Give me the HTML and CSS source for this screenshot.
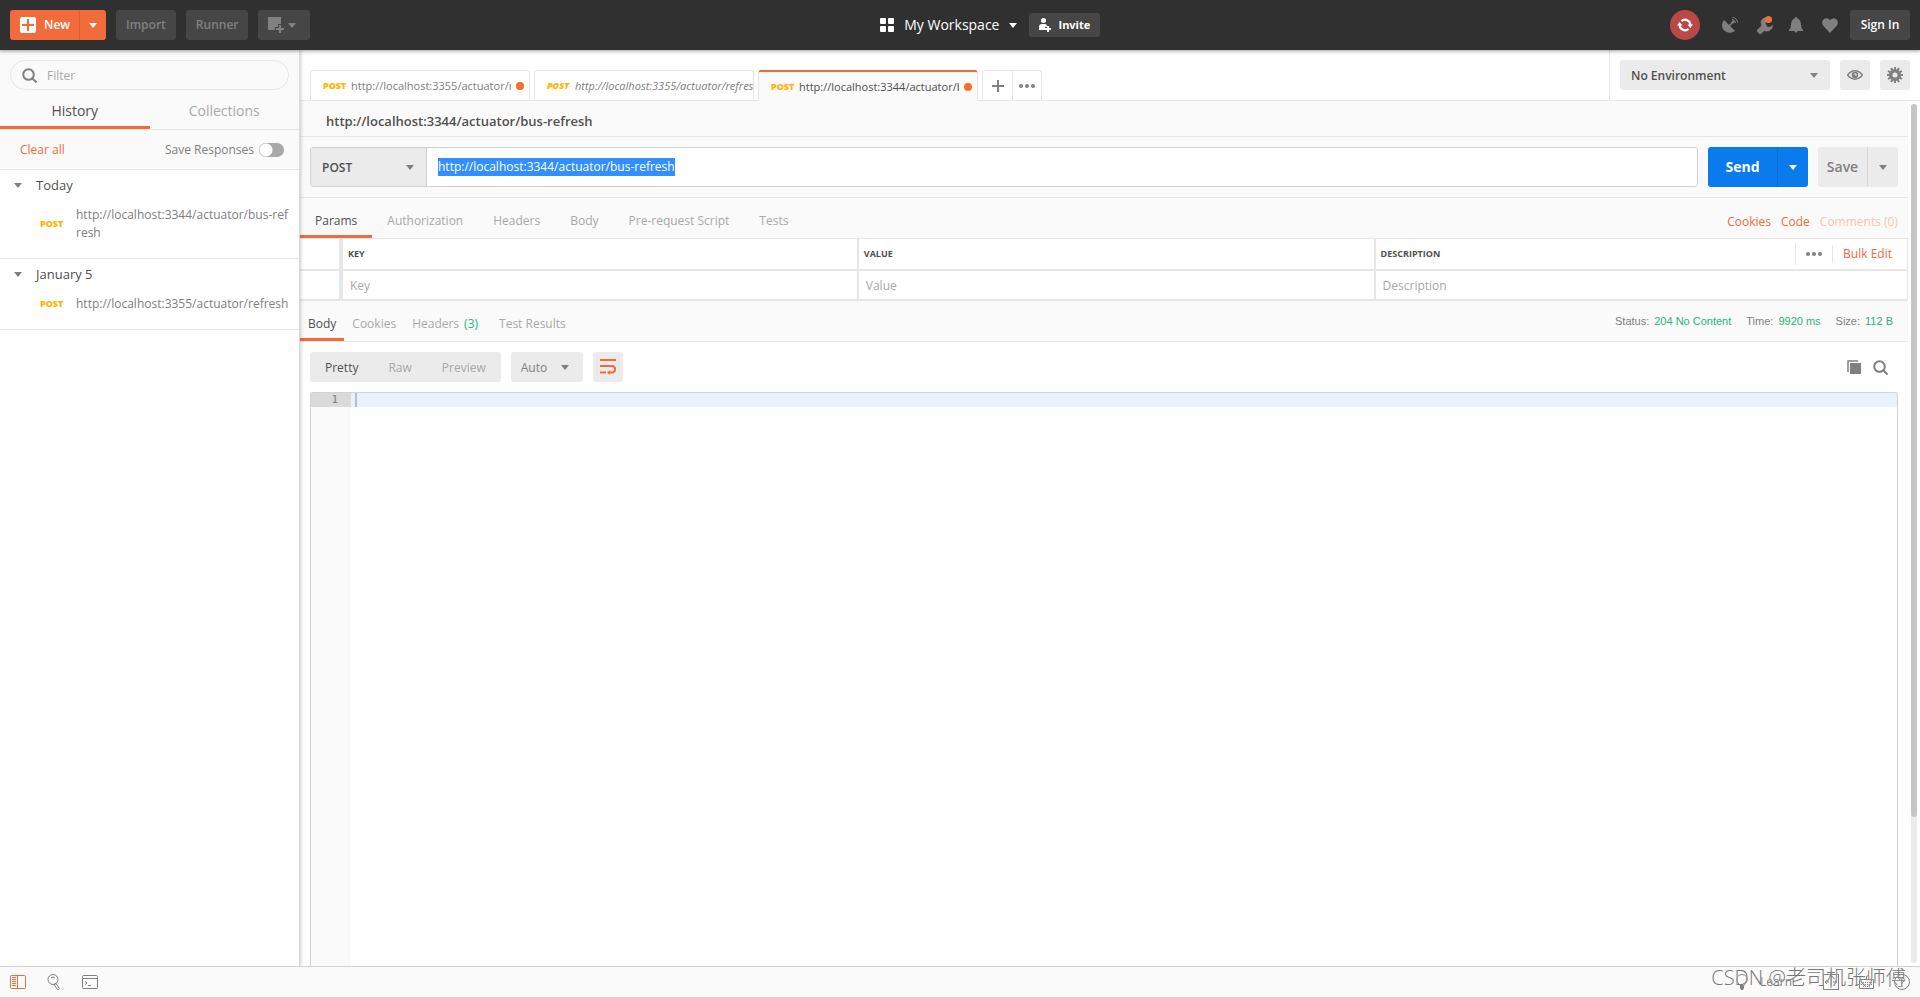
FILE: index.html
```html
<!DOCTYPE html>
<html lang="en">
<head>
<meta charset="utf-8">
<title>Postman</title>
<link rel="stylesheet" href="styles.css">
</head>
<body>
<div class="app">
  <header class="topbar">
    <div class="topbar-side">
      <div class="split split-new">
        <button class="btn-new" type="button">
          <svg width="16" height="16" viewBox="0 0 16 16"><rect width="16" height="16" rx="2" fill="#fff"/><path d="M8 2v12M2 8h12" stroke="#f26b3a" stroke-width="2"/></svg>
          New
        </button>
        <button class="btn-new-more" type="button" aria-label="More new options"><svg class="caret" viewBox="0 0 8 5"><path d="M0 0h8L4 5z"/></svg></button>
      </div>
      <button class="btn-dark" type="button">Import</button>
      <button class="btn-dark" type="button">Runner</button>
      <button class="btn-dark btn-window" type="button" aria-label="New window">
        <svg width="16" height="16" viewBox="0 0 16 16"><path d="M0 0h13v7h-3v3H7v3H0z" fill="#808080"/><path d="M12 8v8M8 12h8" stroke="#808080" stroke-width="2"/></svg>
        <svg class="caret" viewBox="0 0 8 5"><path d="M0 0h8L4 5z"/></svg>
      </button>
    </div>
    <div class="workspace">
      <button class="btn-workspace" type="button">
        <svg width="14" height="14" viewBox="0 0 14 14" fill="#fff"><rect width="6" height="6" rx="1"/><rect x="8" width="6" height="6" rx="1"/><rect y="8" width="6" height="6" rx="1"/><rect x="8" y="8" width="6" height="6" rx="1"/></svg>
        <span>My Workspace</span>
        <svg class="caret" viewBox="0 0 8 5"><path d="M0 0h8L4 5z"/></svg>
      </button>
      <button class="btn-invite" type="button">
        <svg width="12" height="14" viewBox="0 0 12 14" fill="#fff"><circle cx="4.500" cy="2.500" r="2.500"/><path d="M0 12V9q0-3 3-3h3q1.500 0 2 1.500V9H6v3z"/><path d="M8 8h2v2h2v2h-2v2H8v-2H6v-2h2z"/></svg>
        Invite
      </button>
    </div>
    <div class="topbar-side topbar-end">
      <button class="icon-btn sync" type="button" aria-label="Sync">
        <svg width="16" height="16" viewBox="0 0 16 16"><path d="M2.700 8A5.300 5.300 0 0 0 11.500 12M13.300 8A5.300 5.300 0 0 0 4.500 4" fill="none" stroke="#fff" stroke-width="2.200"/><path d="M0 8.500 2.500 5 5.500 8.500zM10.500 7.500H16L13.300 11z" fill="#fff"/></svg>
      </button>
      <button class="icon-btn gap-sat" type="button" aria-label="Capture requests">
        <svg width="16" height="16" viewBox="0 0 16 16" fill="#808080"><path d="M2 3 13 14Q9 17 4.500 15 0 12.500 0 8.500 0 5 2 3z"/><path d="m7 9 4-4" stroke="#808080" stroke-width="1.500"/><circle cx="11" cy="5" r="1.500"/><path d="M10 2.500a3.500 3.500 0 0 1 3.500 3.500M10.500.5A5 5 0 0 1 15.500 5.500" fill="none" stroke="#808080"/></svg>
      </button>
      <button class="icon-btn gap-tool" type="button" aria-label="Settings">
        <svg width="16" height="18" viewBox="0 0 16 18" fill="#808080"><path d="M11 2a5 5 0 0 0-7 6l.5 1.500L0 14v1.500L2.500 18H4l3-3q5 1.500 8-2.500 1-2 .8-4L13 11 10 10.500 8.500 7z"/><circle cx="11.500" cy="3.500" r="3.500" fill="#f26b3a"/></svg>
      </button>
      <button class="icon-btn gap-bell" type="button" aria-label="Notifications">
        <svg width="14" height="16" viewBox="0 0 14 16" fill="#808080"><path d="M7 0q1 0 1.200 1.300Q12 3 12 8q0 3.500 2 5v1H8.500a1.500 1.500 0 0 1-3 0H0v-1q2-1.500 2-5 0-5 3.800-6.700Q6 0 7 0z"/></svg>
      </button>
      <button class="icon-btn gap-heart" type="button" aria-label="Favourites">
        <svg width="16" height="15" viewBox="0 0 16 15" fill="#808080"><path d="M8 15 1.500 8Q-1 4.500 1 2q3-3.500 7 0 4-3.500 7 0 2 2.500-.5 6z"/></svg>
      </button>
      <button class="btn-dark btn-signin" type="button">Sign In</button>
    </div>
  </header>

  <div class="workarea">
    <aside class="sidebar">
      <div class="sidebar-head">
        <label class="filter">
          <svg width="15" height="15" viewBox="0 0 15 15" fill="none" stroke="#808080" stroke-width="2"><circle cx="6.500" cy="6.500" r="5.300"/><path d="m10.500 10.500 4 4"/></svg>
          <input type="text" placeholder="Filter" aria-label="Filter">
        </label>
        <nav class="side-tabs">
          <button class="side-tab is-active" type="button">History</button>
          <button class="side-tab" type="button">Collections</button>
        </nav>
      </div>
      <div class="side-tools">
        <button class="link" type="button">Clear all</button>
        <label class="save-toggle">Save Responses <input type="checkbox" class="switch"></label>
      </div>
      <section class="group">
        <h2 class="group-title"><svg class="caret" viewBox="0 0 8 5"><path d="M0 0h8L4 5z"/></svg>Today</h2>
        <a class="entry" href="#"><span class="method">POST</span><span class="entry-url">http://localhost:3344/actuator/bus-refresh</span></a>
      </section>
      <section class="group">
        <h2 class="group-title"><svg class="caret" viewBox="0 0 8 5"><path d="M0 0h8L4 5z"/></svg>January 5</h2>
        <a class="entry" href="#"><span class="method">POST</span><span class="entry-url">http://localhost:3355/actuator/refresh</span></a>
      </section>
    </aside>

    <main class="main">
      <div class="tabbar">
        <div class="req-tabs">
          <button class="req-tab" type="button"><span class="method">POST</span><span class="req-name">http://localhost:3355/actuator/refresh</span><span class="dot"></span></button>
          <button class="req-tab is-preview" type="button"><span class="method">POST</span><span class="req-name">http://localhost:3355/actuator/refresh</span></button>
          <button class="req-tab is-active" type="button"><span class="method">POST</span><span class="req-name">http://localhost:3344/actuator/bus-refresh</span><span class="dot"></span></button>
          <div class="tab-actions">
            <button type="button" aria-label="New tab"><svg width="12" height="12" viewBox="0 0 12 12"><path d="M6 0v12M0 6h12" stroke="#808080" stroke-width="2"/></svg></button>
            <button type="button" aria-label="Tab options"><svg class="dots" viewBox="0 0 16 4"><circle cx="2" cy="2" r="2"/><circle cx="8" cy="2" r="2"/><circle cx="14" cy="2" r="2"/></svg></button>
          </div>
        </div>
        <div class="env">
          <div class="select-box env-select">
            <select aria-label="Environment"><option>No Environment</option></select>
            <svg class="caret" viewBox="0 0 8 5"><path d="M0 0h8L4 5z"/></svg>
          </div>
          <button class="btn-grey" type="button" aria-label="Environment quick look"><svg width="16" height="10" viewBox="0 0 16 10"><path d="M.5 5Q4 .8 8 .8T15.500 5Q12 9.200 8 9.200T.5 5z" fill="none" stroke="#808080" stroke-width="1.500"/><circle cx="8" cy="5" r="3.300" fill="#808080"/><path d="M8 3v2h2" fill="none" stroke="#ebebeb"/></svg></button>
          <button class="btn-grey" type="button" aria-label="Manage environments"><svg width="16" height="16" viewBox="0 0 16 16" fill="none" stroke="#808080"><circle cx="8" cy="8" r="4.300" stroke-width="3.600"/><path d="M8 0v3M8 13v3M0 8h3M13 8h3M4 1l1.500 2.600M10.500 12.400 12 15M1 4l2.600 1.500M12.400 10.500 15 12M1 12l2.600-1.500M12.400 5.500 15 4M4 15l1.500-2.600M10.500 3.600 12 1" stroke-width="2"/></svg></button>
        </div>
      </div>

      <div class="scroller">
        <div class="content">
          <h1 class="req-title">http://localhost:3344/actuator/bus-refresh</h1>
          <form class="urlbar">
            <div class="url-group">
              <div class="select-box method-select">
                <select aria-label="Method"><option>POST</option></select>
                <svg class="caret" viewBox="0 0 8 5"><path d="M0 0h8L4 5z"/></svg>
              </div>
              <input id="url" type="text" aria-label="Request URL" spellcheck="false" value="http://localhost:3344/actuator/bus-refresh">
            </div>
            <div class="split split-send">
              <button type="button">Send</button>
              <button type="button" aria-label="Send options"><svg class="caret" viewBox="0 0 8 5"><path d="M0 0h8L4 5z"/></svg></button>
            </div>
            <div class="split split-save">
              <button type="button">Save</button>
              <button type="button" aria-label="Save options"><svg class="caret" viewBox="0 0 8 5"><path d="M0 0h8L4 5z"/></svg></button>
            </div>
          </form>

          <div class="req-nav">
            <nav class="nav-tabs">
              <button class="is-active" type="button">Params</button>
              <button type="button">Authorization</button>
              <button type="button">Headers</button>
              <button type="button">Body</button>
              <button type="button">Pre-request Script</button>
              <button type="button">Tests</button>
            </nav>
            <div class="nav-links">
              <button class="link" type="button">Cookies</button>
              <button class="link" type="button">Code</button>
              <button class="link" type="button" disabled>Comments (0)</button>
            </div>
          </div>

          <table class="params">
            <colgroup><col class="col-check"><col class="col-text"><col class="col-text"><col></colgroup>
            <thead>
              <tr>
                <th></th><th>KEY</th><th>VALUE</th>
                <th>
                  <div class="desc-head">
                    <span>DESCRIPTION</span>
                    <div class="desc-tools">
                      <button type="button" aria-label="Columns"><svg class="dots" viewBox="0 0 16 4"><circle cx="2" cy="2" r="2"/><circle cx="8" cy="2" r="2"/><circle cx="14" cy="2" r="2"/></svg></button>
                      <button class="link bulk" type="button">Bulk Edit</button>
                    </div>
                  </div>
                </th>
              </tr>
            </thead>
            <tbody>
              <tr>
                <td></td>
                <td><input type="text" placeholder="Key" aria-label="Key"></td>
                <td><input type="text" placeholder="Value" aria-label="Value"></td>
                <td><input type="text" placeholder="Description" aria-label="Description"></td>
              </tr>
            </tbody>
          </table>

          <div class="res-nav">
            <nav class="res-tabs">
              <button class="is-active" type="button">Body</button>
              <button type="button">Cookies</button>
              <button type="button">Headers <span class="count">(3)</span></button>
              <button type="button">Test Results</button>
            </nav>
            <dl class="stats">
              <div><dt>Status:</dt><dd>204 No Content</dd></div>
              <div><dt>Time:</dt><dd>9920 ms</dd></div>
              <div><dt>Size:</dt><dd>112 B</dd></div>
            </dl>
          </div>

          <section class="response">
            <div class="res-tools">
              <div class="segmented">
                <button class="is-active" type="button">Pretty</button>
                <button type="button">Raw</button>
                <button type="button">Preview</button>
              </div>
              <div class="select-box format-select">
                <select aria-label="Format"><option>Auto</option></select>
                <svg class="caret" viewBox="0 0 8 5"><path d="M0 0h8L4 5z"/></svg>
              </div>
              <button class="btn-grey" type="button" aria-label="Wrap lines"><svg width="16" height="16" viewBox="0 0 16 16" fill="none" stroke="#f26b3a" stroke-width="2"><path d="M0 1h16M0 7h12a3.200 3.200 0 0 1 0 6.500H9M0 13.500h6"/><path d="m7 13.500 3-2.500v5z" fill="#f26b3a" stroke="none"/></svg></button>
              <div class="res-actions">
                <button class="icon-btn" type="button" aria-label="Copy"><svg width="14" height="14" viewBox="0 0 14 14"><path d="M3 3h11v11H3z" fill="#808080"/><path d="M1 12V1h10" fill="none" stroke="#808080" stroke-width="1.500"/></svg></button>
                <button class="icon-btn" type="button" aria-label="Search"><svg width="15" height="15" viewBox="0 0 15 15" fill="none" stroke="#808080" stroke-width="2"><circle cx="6.500" cy="6.500" r="5.300"/><path d="m10.500 10.500 4 4"/></svg></button>
              </div>
            </div>
            <div class="editor">
              <div class="gutter"><span>1</span></div>
              <div class="code"><div class="code-line"><span class="cursor"></span></div></div>
            </div>
          </section>
        </div>
        <div class="track"><div class="rail"><div class="thumb"></div></div></div>
      </div>
    </main>
  </div>

  <footer class="statusbar">
    <div class="status-group">
      <button class="icon-btn" type="button" aria-label="Toggle sidebar"><svg width="16" height="14" viewBox="0 0 16 14" fill="none" stroke="#f26b3a"><rect x=".5" y=".5" width="15" height="13" rx="1"/><path d="M7.500 0v14M2 2.500h4M2 4.500h4M2 6.500h4M2 8.500h4M2 10.500h4"/></svg></button>
      <button class="icon-btn" type="button" aria-label="Find"><svg width="14" height="16" viewBox="0 0 14 16" fill="none" stroke="#808080"><circle cx="6" cy="5.500" r="5"/><path d="M4 4q2-2 4 0M7 10.500l3.500 5q1.500.5 2-1L9 9.500z"/></svg></button>
      <button class="icon-btn" type="button" aria-label="Console"><svg width="16" height="14" viewBox="0 0 16 14" fill="none" stroke="#808080"><rect x=".5" y=".5" width="15" height="13" rx="1"/><path d="M0 3.500h16M3 6.500l2 1.500-2 1.500M6 10.500h3"/></svg></button>
    </div>
    <div class="status-group status-end">
      <button class="icon-btn learn" type="button"><svg width="12" height="16" viewBox="0 0 12 16" fill="none" stroke="#808080"><path d="M4 11.500Q3.500 10 2 9-.5 6 1.500 2.500 3.500.5 6 .5t4.500 2Q12.500 6 10 9q-1.500 1-2 2.500z"/><path d="M4 12h4v2l-1 2H5l-1-2z" fill="#808080" stroke="none"/></svg>Learn</button>
      <button class="icon-btn" type="button" aria-label="Two pane view"><svg width="16" height="16" viewBox="0 0 16 16" fill="none" stroke="#808080"><rect x=".5" y=".5" width="15" height="15"/><path d="M8 2v12M6 8H2l2-2M2 8l2 2M10 8h4l-2-2M14 8l-2 2"/></svg></button>
      <button class="icon-btn" type="button" aria-label="Shortcuts"><svg width="15" height="14" viewBox="0 0 15 14" fill="none" stroke="#808080"><path d="M.5 4.500h14v9H.5zM7.500 4.500V2q0-1.500 2-1.500"/><path d="M2 7.500h11M2 9.500h11M4 11.500h7" stroke-dasharray="1 1"/></svg></button>
      <button class="icon-btn" type="button" aria-label="Help"><svg width="16" height="16" viewBox="0 0 16 16" fill="none" stroke="#808080"><circle cx="8" cy="8" r="7.500"/><path d="M5.500 6Q5.500 4 8 4t2.500 2Q10.500 7 8 8.500V10M8 11.500V13"/></svg></button>
    </div>
    <div class="credit">CSDN @老司机张师傅</div>
  </footer>
</div>
<script src="app.js"></script>
</body>
</html>
```
FILE: styles.css
```css
* { box-sizing: border-box; }
body {
  margin: 0;
  font-family: "Open Sans", "Noto Sans", sans-serif;
  font-size: 12px;
  line-height: 18px;
  color: #505050;
  background: #fff;
}
button, input, select { font: inherit; color: inherit; }
button { padding: 0; border: 0; background: none; display: flex; align-items: center; justify-content: center; white-space: nowrap; }
svg { display: block; flex: none; }
h1, h2, dl, dd { margin: 0; }
.caret { width: 8px; height: 5px; fill: #808080; }
.dots { width: 16px; height: 4px; fill: #808080; }
.link { color: #f26b3a; }
.method { flex: none; width: 24px; font-size: 9px; font-weight: 800; text-align: left; color: #ffb400; }
.app { height: 100vh; display: flex; flex-direction: column; overflow: hidden; }

.topbar {
  flex: none;
  height: 50px;
  padding: 0 10px;
  display: flex;
  align-items: center;
  justify-content: space-between;
  background: #303030;
  color: #fff;
  box-shadow: 0 0 4px 1px rgba(0, 0, 0, .4);
  z-index: 2;
}
.topbar-side { display: flex; align-items: center; gap: 10px; }
.topbar-end { gap: 0; }
.split { flex: none; display: flex; border-radius: 3px; overflow: hidden; }
.split-new { background: #f26b3a; font-weight: 600; }
.btn-new { width: 69px; height: 30px; padding-left: 10px; justify-content: flex-start; gap: 8px; }
.btn-new-more { width: 27px; border-left: 1px solid #da6034; }
.btn-new-more .caret, .workspace .caret, .split-send .caret { fill: #fff; }
.btn-dark { height: 30px; padding: 0 10px; border-radius: 3px; background: #464646; color: #808080; font-weight: 600; }
.btn-window { width: 52px; gap: 4px; padding: 0 14px 0 10px; }
.workspace { display: flex; align-items: center; gap: 12px; }
.btn-workspace { gap: 10px; font-size: 14px; }
.btn-invite { height: 24px; padding: 0 10px; gap: 7px; border-radius: 3px; background: #464646; font-size: 11px; font-weight: 700; }
.icon-btn { flex: none; }
.sync { width: 30px; height: 30px; border-radius: 50%; background: #b94947; }
.gap-sat { margin-left: 22px; }
.gap-tool { margin-left: 19px; }
.gap-bell { margin-left: 16px; }
.gap-heart { margin-left: 19px; }
.btn-signin { margin-left: 12px; width: 60px; color: #fff; }

.workarea { flex: 1; min-height: 0; display: flex; }
.sidebar { flex: none; width: 300px; border-right: 1px solid #dcdcdc; box-shadow: 0 0 4px rgba(0, 0, 0, .3); z-index: 1; background: #fff; }
.sidebar-head { padding-top: 10px; background: #fafafa; border-bottom: 1px solid #e6e6e6; }
.filter { height: 30px; margin: 0 10px; padding: 0 11px; display: flex; align-items: center; gap: 10px; border: 1px solid #e6e6e6; border-radius: 15px; }
.filter input { flex: 1; min-width: 0; padding: 1px 0 0; border: 0; outline: 0; background: none; }
input::placeholder { color: #a9a9a9; opacity: 1; }
.side-tabs { display: flex; }
.side-tab { flex: 1; height: 39px; padding-top: 6px; border-bottom: 3px solid transparent; font-size: 14px; color: #a9a9a9; }
.side-tab.is-active { color: #505050; border-bottom-color: #f26b3a; }
.side-tools { height: 40px; padding: 0 15px 0 20px; display: flex; align-items: center; justify-content: space-between; background: #fafafa; border-bottom: 1px solid #e6e6e6; }
.save-toggle { display: flex; align-items: center; gap: 5px; color: #808080; }
.switch { appearance: none; margin: 0; width: 25px; height: 14px; border-radius: 7px; background: radial-gradient(circle at 7px 7px, #fff 6px, transparent 7px) #a9a9a9; }
.group { padding: 5px 0 16px; border-bottom: 1px solid #e6e6e6; }
.group-title { display: flex; align-items: center; gap: 14px; padding-left: 14px; height: 20px; font-size: 13px; font-weight: 400; }
.entry { display: flex; align-items: center; gap: 12px; padding: 11px 10px 0 40px; color: #808080; text-decoration: none; }
.entry-url { flex: 1; min-width: 0; word-break: break-all; }

.main { flex: 1; min-width: 0; display: flex; flex-direction: column; }
.tabbar { flex: none; height: 51px; display: flex; border-bottom: 1px solid #e6e6e6; }
.req-tabs { flex: 1; min-width: 0; padding: 20px 10px 0; display: flex; gap: 4px; margin-bottom: -1px; }
.req-tab { width: 220px; height: 30px; padding: 0 5px 0 12px; justify-content: flex-start; border: 1px solid #e6e6e6; border-bottom: 0; border-radius: 3px 3px 0 0; font-size: 11px; color: #808080; }
.req-name { flex: 1; min-width: 0; margin-left: 4px; overflow: hidden; text-align: left; }
.dot { flex: none; width: 8px; height: 8px; margin-left: 5px; border-radius: 50%; background: #f47023; }
.req-tab.is-preview { padding-right: 0; font-style: italic; }
.req-tab.is-active { height: 31px; border-top: 2px solid #f26b3a; background: #fafafa; color: #505050; }
.tab-actions { display: flex; height: 30px; border: 1px solid #e6e6e6; border-bottom: 0; border-radius: 3px 3px 0 0; }
.tab-actions button { width: 29px; }
.tab-actions button + button { border-left: 1px solid #e6e6e6; }
.env { flex: none; display: flex; gap: 10px; padding: 10px; border-left: 1px solid #e6e6e6; }
.select-box { position: relative; display: flex; align-items: center; border-radius: 3px; background: #ebebeb; }
.select-box select { appearance: none; width: 100%; height: 100%; padding: 1px 11px 0; border: 0; outline: 0; background: none; }
.select-box .caret { position: absolute; right: 12px; pointer-events: none; }
.env-select { width: 210px; height: 30px; font-weight: 600; }
.btn-grey { flex: none; width: 30px; height: 30px; border-radius: 3px; background: #ebebeb; }

.scroller { flex: 1; min-height: 0; display: flex; }
.content { flex: 1; min-width: 0; display: flex; flex-direction: column; background: #fafafa; }
.req-title { padding: 11px 26px 6px; font-size: 13px; font-weight: 600; line-height: 18px; border-bottom: 1px solid #e6e6e6; }
.urlbar { display: flex; gap: 10px; padding: 10px; border-bottom: 1px solid #e6e6e6; }
.url-group { flex: 1; min-width: 0; height: 40px; display: flex; border: 1px solid #d2d2d2; border-radius: 3px; background: #fff; }
.method-select { width: 116px; border-right: 1px solid #d2d2d2; border-radius: 0; font-weight: 600; }
.url-group input { flex: 1; min-width: 0; padding: 0 11px; border: 0; outline: 0; background: none; }
.url-group input::selection { background: #338fff; color: #fff; }
.split-send { background: #097bed; color: #fff; font-size: 14px; font-weight: 700; }
.split-send button:first-child { width: 69px; }
.split-send button + button { width: 31px; border-left: 1px solid #086fd5; }
.split-save { background: #ebebeb; color: #808080; font-size: 14px; font-weight: 600; }
.split-save button:first-child { width: 49px; }
.split-save button + button { width: 31px; border-left: 1px solid #d8d8d8; }

.req-nav { display: flex; justify-content: space-between; border-bottom: 1px solid #e6e6e6; }
.nav-tabs { display: flex; }
.nav-tabs button { height: 40px; padding: 8px 15px 0; border-bottom: 3px solid transparent; color: #a9a9a9; }
.nav-tabs .is-active, .res-tabs .is-active { color: #505050; border-bottom-color: #f26b3a; }
.nav-links { display: flex; gap: 10px; padding: 8px 10px 0 0; }
.nav-links .link:disabled { color: #f9c4b0; }

.params { width: 100%; table-layout: fixed; border-collapse: collapse; background: #fff; border-right: 1px solid #e6e6e6; }
.col-check { width: 41px; }
.col-text { width: 32.15%; }
.params th, .params td { padding: 0; border-left: 2px solid #e6e6e6; border-bottom: 2px solid #e6e6e6; text-align: left; }
.params th:first-child, .params td:first-child { border-left: 0; border-right: 4px solid #e6e6e6; }
.params th { height: 31px; padding-left: 5px; font-size: 9px; font-weight: 700; }
.params td { height: 30px; }
.params input { display: block; width: 100%; height: 28px; padding: 0 7px; border: 0; outline: 0; background: none; }
.desc-head, .desc-tools { display: flex; align-items: center; justify-content: space-between; }
.desc-tools { border-left: 1px solid #e6e6e6; height: 22px; }
.desc-tools button { width: 36px; height: 18px; }
.desc-tools .bulk { width: auto; padding: 0 15px 0 10px; border-left: 1px solid #e6e6e6; font-size: 12px; font-weight: 400; }

.res-nav { display: flex; justify-content: space-between; border-bottom: 1px solid #e6e6e6; }
.res-tabs { display: flex; }
.res-tabs button { height: 40px; padding: 8px 8px 0; gap: 5px; border-bottom: 3px solid transparent; color: #a9a9a9; }
.res-tabs button + button + button { margin-right: 5px; }
.count { color: #26b47f; }
.stats { display: flex; align-items: center; gap: 15px; padding-right: 15px; font-family: "Liberation Sans", Arial, sans-serif; font-size: 11px; }
.stats div { display: flex; gap: 5px; }
.stats dt { color: #808080; }
.stats dd { color: #26b47f; }
.response { flex: 1; min-height: 0; display: flex; flex-direction: column; padding: 10px 10px 0; background: #fff; }
.res-tools { display: flex; gap: 10px; }
.segmented { display: flex; height: 30px; border-radius: 3px; background: #ebebeb; }
.segmented button { padding: 2px 15px 0; color: #a9a9a9; }
.segmented .is-active { color: #505050; }
.format-select { width: 72px; color: #808080; }
.format-select select { padding: 2px 10px 0; }
.format-select .caret { right: 14px; }
.res-actions { display: flex; gap: 12px; margin-left: auto; padding-right: 10px; }
.editor { flex: 1; min-height: 0; margin-top: 10px; display: flex; border: 1px solid #d2d2d2; border-bottom: 0; border-radius: 3px 3px 0 0; font-family: "DejaVu Sans Mono", monospace; font-size: 11px; line-height: 14px; }
.gutter { width: 40px; background: #fafafa; text-align: right; color: #808080; }
.gutter span { display: block; padding-right: 13px; background: #dadada; }
.code { flex: 1; }
.code-line { height: 14px; padding-left: 4px; background: #e8f2fe; }
.cursor { display: block; width: 2px; height: 14px; background: #b4bfcc; }
.track { flex: none; width: 12px; padding: 3px; background: #fff; }
.rail { width: 6px; height: 100%; border-radius: 3px; background: #ebebeb; }
.thumb { width: 6px; height: 83%; border-radius: 3px; background: #c5c5c5; }

.statusbar { position: relative; flex: none; height: 31px; padding: 0 10px; display: flex; align-items: center; justify-content: space-between; border-top: 1px solid #d2d2d2; background: #fafafa; z-index: 2; }
.status-group { display: flex; align-items: center; gap: 21px; }
.status-end { gap: 20px; color: #808080; }
.learn { gap: 12px; margin-right: 11px; }
.credit { position: absolute; right: 14px; top: -3px; font-family: "Open Sans", "Noto Sans CJK SC", sans-serif; font-size: 20px; line-height: 28px; font-weight: 300; color: #777; text-shadow: 0 0 1px #fff; white-space: nowrap; }
```
FILE: app.js
```js
const urlInput = document.getElementById("url");
urlInput.focus();
urlInput.select();
```
